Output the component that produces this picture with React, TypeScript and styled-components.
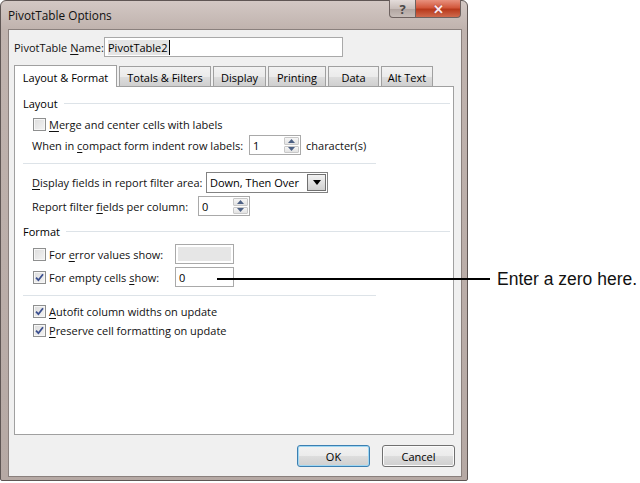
import React from "react";
import styled, { createGlobalStyle, css } from "styled-components";

const Global = createGlobalStyle`
  html, body { margin: 0; padding: 0; background: #ffffff; }
  body { font-family: "Open Sans", "Noto Sans", sans-serif; }
`;

const UI = `"Open Sans", "Noto Sans", sans-serif`;
const FS = "11px";

const Stage = styled.div`
  position: relative;
  width: 640px;
  height: 483px;
  display: flex;
  align-items: flex-start;
  overflow: hidden;
`;

const Window = styled.div`
  width: 468px;
  height: 481px;
  box-sizing: border-box;
  border: 1px solid #5f5654;
  border-radius: 6px 6px 2px 2px;
  background: linear-gradient(180deg, #d3c8c4 0px, #c0b3ae 28px, #b6a9a4 100%);
  padding: 0 5px 3px 7px;
  display: flex;
  flex-direction: column;
  font-family: ${UI};
`;

const TitleBar = styled.div`
  height: 28px;
  display: flex;
  align-items: flex-start;
`;

const Title = styled.div`
  margin-top: 6px;
  font-size: 11.8px;
  color: #111;
`;

const Captions = styled.div`
  margin-left: auto;
  margin-right: 1px;
  margin-top: -1px;
  display: flex;
`;

const CaptionButton = styled.div<{ $close?: boolean }>`
  height: 18px;
  box-sizing: border-box;
  display: flex;
  align-items: center;
  justify-content: center;
  border: 1px solid #6e6260;
  border-top: none;
  font-weight: 700;
  font-size: 13px;
  ${(p) =>
    p.$close
      ? css`
          width: 45px;
          border-radius: 0 0 4px 0;
          background: linear-gradient(180deg, #e8917e 0%, #d2583c 45%, #b8391c 55%, #cf6a4e 100%);
          color: #fde8ef;
          border-left: none;
          text-shadow: 0 0 1px #7a1f10;
        `
      : css`
          width: 27px;
          border-radius: 0 0 0 4px;
          background: linear-gradient(180deg, #e4dcda 0%, #c9beba 50%, #b2a6a2 55%, #c7bcb8 100%);
          color: #4a4848;
        `}
`;

const Client = styled.div`
  flex: 1;
  background: #f0f0f0;
  border: 1px solid #8a807d;
  padding: 7px 7px 0 5px;
  display: flex;
  flex-direction: column;
`;

const Row = styled.div<{ $h?: number; $mt?: number; $pl?: number }>`
  display: flex;
  align-items: center;
  height: ${(p) => p.$h ?? 20}px;
  margin-top: ${(p) => p.$mt ?? 0}px;
  padding-left: ${(p) => p.$pl ?? 0}px;
  font-size: ${FS};
  color: #000;
  white-space: nowrap;
`;

const Label = styled.span<{ $w?: number; $ml?: number }>`
  display: inline-block;
  ${(p) => (p.$w ? `width: ${p.$w}px;` : "")}
  margin-left: ${(p) => p.$ml ?? 0}px;
  font-size: ${FS};
  color: #111;
  white-space: nowrap;
`;

const Key = styled.span`
  text-decoration: underline;
  text-underline-offset: 2px;
`;

const TextBox = styled.div<{ $w: number; $disabled?: boolean }>`
  width: ${(p) => p.$w}px;
  height: 20px;
  box-sizing: border-box;
  border: 1px solid #a9a9a9;
  background: #fff;
  display: flex;
  align-items: center;
  padding-left: 3px;
  font-size: ${FS};
  ${(p) =>
    p.$disabled &&
    css`
      padding: 2px;
      &::after {
        content: "";
        flex: 1;
        align-self: stretch;
        background: #e6e6e6;
      }
    `}
`;

const Selected = styled.span`
  background: #e4e4e4;
  border-right: 1px solid #000;
  padding-right: 1px;
`;

const TabStrip = styled.div`
  display: flex;
  align-items: flex-end;
  gap: 2px;
  margin-top: 8px;
  position: relative;
  z-index: 1;
`;

const Tab = styled.div<{ $w: number; $active?: boolean }>`
  width: ${(p) => p.$w}px;
  box-sizing: border-box;
  display: flex;
  align-items: center;
  justify-content: center;
  font-size: ${FS};
  color: #000;
  border: 1px solid #a0a0a0;
  border-bottom: none;
  ${(p) =>
    p.$active
      ? css`
          height: 22px;
          background: #fff;
          margin-bottom: -1px;
          padding-top: 1px;
        `
      : css`
          height: 20px;
          background: linear-gradient(180deg, #f2f2f2 0%, #ebebeb 50%, #dddddd 51%, #cfcfcf 100%);
          padding-top: 2px;
        `}
`;

const Panel = styled.div`
  height: 349px;
  box-sizing: border-box;
  background: #fff;
  border: 1px solid #a0a0a0;
  padding: 8px 3px 0 8px;
  display: flex;
  flex-direction: column;
`;

const Heading = styled.div<{ $mt?: number }>`
  height: 16px;
  margin-top: ${(p) => p.$mt ?? 0}px;
  display: flex;
  align-items: center;
  gap: 6px;
  font-size: ${FS};
  color: #000;
  &::after {
    content: "";
    flex: 1;
    height: 1px;
    background: #dde3e8;
  }
`;

const Separator = styled.div<{ $mt: number }>`
  width: 353px;
  height: 1px;
  margin-top: ${(p) => p.$mt}px;
  background: #dde3e8;
`;

const Box = styled.span`
  width: 13px;
  height: 13px;
  box-sizing: border-box;
  border: 1px solid #8e8f8f;
  background: linear-gradient(135deg, #dcdcdc 0%, #f4f4f4 100%);
  box-shadow: inset 0 0 0 1px #f6f6f6;
  display: inline-flex;
  align-items: center;
  justify-content: center;
  margin-right: 3px;
  flex-shrink: 0;
`;

const Spinner = styled.div<{ $w: number }>`
  width: ${(p) => p.$w}px;
  height: 20px;
  box-sizing: border-box;
  border: 1px solid #a9a9a9;
  background: #fff;
  display: flex;
  font-size: ${FS};
`;

const SpinValue = styled.span`
  flex: 1;
  display: flex;
  align-items: center;
  padding-left: 3px;
`;

const SpinButtons = styled.div`
  width: 15px;
  display: flex;
  flex-direction: column;
  gap: 1px;
  padding: 1px 1px 1px 0;
`;

const SpinBtn = styled.div`
  flex: 1;
  border: 1px solid #c8c8c8;
  border-radius: 1px;
  background: linear-gradient(180deg, #f6f6f6, #e2e2e2);
  display: flex;
  align-items: center;
  justify-content: center;
`;

const Select = styled.div`
  width: 122px;
  height: 21px;
  box-sizing: border-box;
  border: 1px solid #828282;
  background: #fff;
  display: flex;
  font-size: ${FS};
`;

const SelectValue = styled.span`
  flex: 1;
  display: flex;
  align-items: center;
  padding-left: 3px;
`;

const DropBtn = styled.div`
  width: 17px;
  margin: 1px;
  border: 1px solid #707070;
  background: linear-gradient(180deg, #f2f2f2, #d0d0d0);
  display: flex;
  align-items: center;
  justify-content: center;
`;

const ButtonRow = styled.div`
  display: flex;
  justify-content: flex-end;
  gap: 12px;
  margin-top: 10px;
  margin-right: -1px;
`;

const Button = styled.div<{ $default?: boolean }>`
  width: 73px;
  height: 22px;
  box-sizing: border-box;
  border-radius: 3px;
  display: flex;
  align-items: center;
  justify-content: center;
  font-size: ${FS};
  color: #000;
  background: linear-gradient(180deg, #f2f2f2 0%, #ebebeb 50%, #dddddd 51%, #cfcfcf 100%);
  border: 1px solid ${(p) => (p.$default ? "#3c7fb1" : "#707070")};
  box-shadow: ${(p) => (p.$default ? "inset 0 0 0 1px #9fd7f3" : "inset 0 0 0 1px #fbfbfb")};
`;

const CalloutLine = styled.div`
  position: absolute;
  left: 217px;
  top: 278px;
  width: 273px;
  height: 2px;
  background: #000;
`;

const CalloutText = styled.div`
  margin-left: 29px;
  margin-top: 268px;
  font-family: "Liberation Sans", Arial, sans-serif;
  font-size: 17.5px;
  line-height: 22px;
  color: #111;
  white-space: nowrap;
`;

const Check = () => (
  <svg width="9" height="9" viewBox="0 0 9 9">
    <path d="M1 4.6 L3.4 7.2 L8 1.2" fill="none" stroke="#3b4f8f" strokeWidth="1.8" />
  </svg>
);

const Up = () => (
  <svg width="7" height="4" viewBox="0 0 7 4">
    <path d="M0 4 L3.5 0 L7 4 Z" fill="#4d6185" />
  </svg>
);
const Down = () => (
  <svg width="7" height="4" viewBox="0 0 7 4">
    <path d="M0 0 L3.5 4 L7 0 Z" fill="#4d6185" />
  </svg>
);

const CheckBox = ({ checked }: { checked?: boolean }) => <Box>{checked && <Check />}</Box>;

const Spin = ({ w, value }: { w: number; value: string }) => (
  <Spinner $w={w}>
    <SpinValue>{value}</SpinValue>
    <SpinButtons>
      <SpinBtn>
        <Up />
      </SpinBtn>
      <SpinBtn>
        <Down />
      </SpinBtn>
    </SpinButtons>
  </Spinner>
);

export default function App() {
  return (
    <Stage>
      <Global />
      <Window>
        <TitleBar>
          <Title>PivotTable Options</Title>
          <Captions>
            <CaptionButton>?</CaptionButton>
            <CaptionButton $close>✕</CaptionButton>
          </Captions>
        </TitleBar>
        <Client>
          <Row $h={20}>
            <Label $w={90}>
              PivotTable <Key>N</Key>ame:
            </Label>
            <TextBox $w={239}>
              <Selected>PivotTable2</Selected>
            </TextBox>
          </Row>
          <TabStrip>
            <Tab $w={103} $active>
              Layout &amp; Format
            </Tab>
            <Tab $w={92}>Totals &amp; Filters</Tab>
            <Tab $w={53}>Display</Tab>
            <Tab $w={58}>Printing</Tab>
            <Tab $w={51}>Data</Tab>
            <Tab $w={52}>Alt Text</Tab>
          </TabStrip>
          <Panel>
            <Heading>Layout</Heading>
            <Row $h={18} $mt={4} $pl={10}>
              <CheckBox />
              <Label>
                <Key>M</Key>erge and center cells with labels
              </Label>
            </Row>
            <Row $h={22} $mt={1} $pl={9}>
              <Label $w={217}>
                When in <Key>c</Key>ompact form indent row labels:
              </Label>
              <Spin w={52} value="1" />
              <Label $ml={5}>character(s)</Label>
            </Row>
            <Separator $mt={7} />
            <Row $h={22} $mt={7} $pl={9}>
              <Label $w={174}>
                <Key>D</Key>isplay fields in report filter area:
              </Label>
              <Select>
                <SelectValue>Down, Then Over</SelectValue>
                <DropBtn>
                  <svg width="8" height="5" viewBox="0 0 8 5">
                    <path d="M0 0 L4 5 L8 0 Z" fill="#000" />
                  </svg>
                </DropBtn>
              </Select>
            </Row>
            <Row $h={22} $mt={2} $pl={9}>
              <Label $w={166}>
                Report filter <Key>f</Key>ields per column:
              </Label>
              <Spin w={52} value="0" />
            </Row>
            <Heading $mt={6}>Format</Heading>
            <Row $h={22} $mt={4} $pl={10}>
              <CheckBox />
              <Label $w={126}>
                For <Key>e</Key>rror values show:
              </Label>
              <TextBox $w={59} $disabled />
            </Row>
            <Row $h={22} $mt={1} $pl={10}>
              <CheckBox checked />
              <Label $w={126}>
                For empty cells <Key>s</Key>how:
              </Label>
              <TextBox $w={59}>0</TextBox>
            </Row>
            <Separator $mt={7} />
            <Row $h={18} $mt={6} $pl={10}>
              <CheckBox checked />
              <Label>
                <Key>A</Key>utofit column widths on update
              </Label>
            </Row>
            <Row $h={18} $mt={1} $pl={10}>
              <CheckBox checked />
              <Label>
                <Key>P</Key>reserve cell formatting on update
              </Label>
            </Row>
          </Panel>
          <ButtonRow>
            <Button $default>OK</Button>
            <Button>Cancel</Button>
          </ButtonRow>
        </Client>
      </Window>
      <CalloutText>Enter a zero here.</CalloutText>
      <CalloutLine />
    </Stage>
  );
}
